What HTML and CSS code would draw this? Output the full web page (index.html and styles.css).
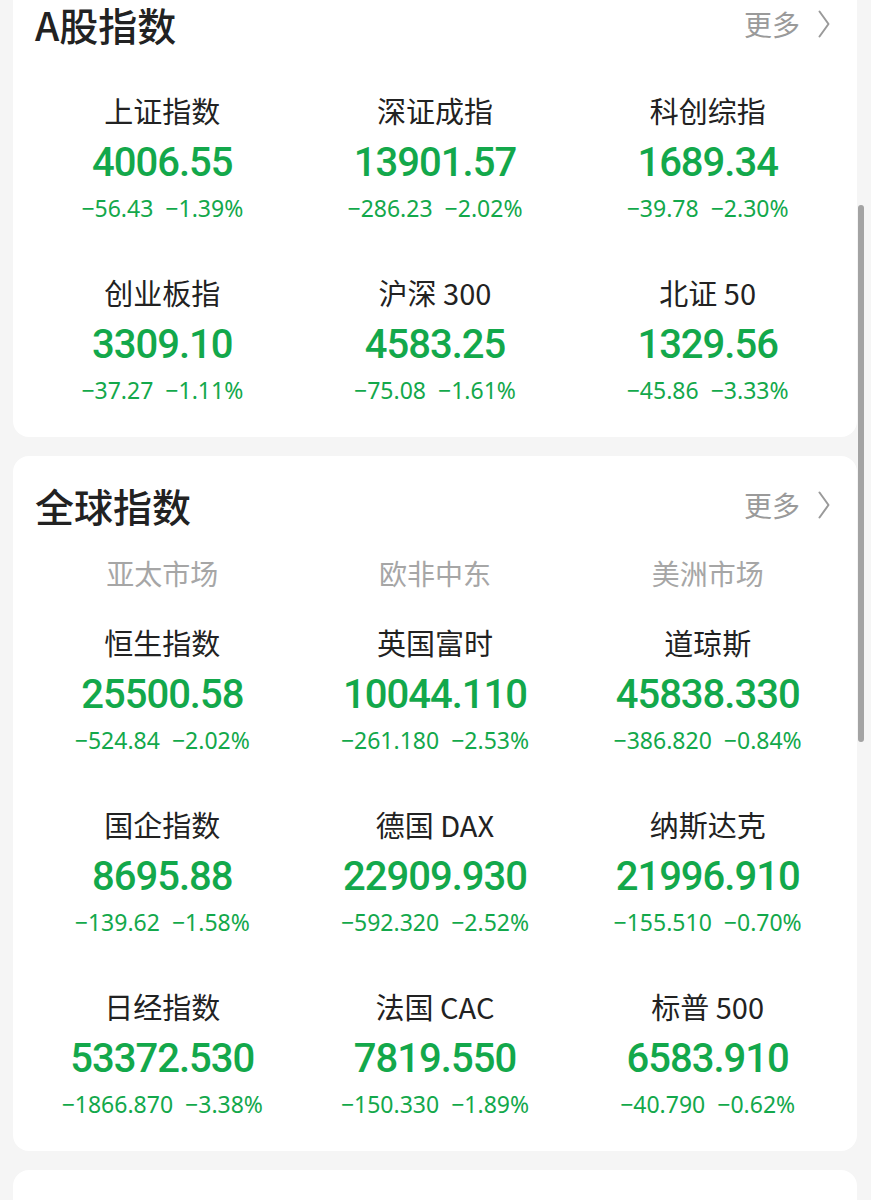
FILE: index.html
```html
<!DOCTYPE html>
<html lang="zh-CN">
<head>
<meta charset="utf-8">
<title>指数</title>
<link rel="stylesheet" href="styles.css">
</head>
<body>
<div class="page">
  <section class="card">
    <header class="card-head">
      <h2 class="card-title">A股指数</h2>
      <a class="more">更多<svg class="chev" viewBox="0 0 12 28" width="12" height="28"><path d="M1.5 1.5 L10.5 14 L1.5 26.5" fill="none" stroke="#9a9a9a" stroke-width="2" stroke-linecap="round" stroke-linejoin="round"/></svg></a>
    </header>
    <div class="grid grid-a">
      <div class="cell"><div class="label">上证指数</div><div class="num">4006.55</div><div class="chg"><span>−56.43</span><span>−1.39%</span></div></div>
      <div class="cell"><div class="label">深证成指</div><div class="num">13901.57</div><div class="chg"><span>−286.23</span><span>−2.02%</span></div></div>
      <div class="cell"><div class="label">科创综指</div><div class="num">1689.34</div><div class="chg"><span>−39.78</span><span>−2.30%</span></div></div>
      <div class="cell"><div class="label">创业板指</div><div class="num">3309.10</div><div class="chg"><span>−37.27</span><span>−1.11%</span></div></div>
      <div class="cell"><div class="label">沪深 300</div><div class="num">4583.25</div><div class="chg"><span>−75.08</span><span>−1.61%</span></div></div>
      <div class="cell"><div class="label">北证 50</div><div class="num">1329.56</div><div class="chg"><span>−45.86</span><span>−3.33%</span></div></div>
    </div>
  </section>

  <section class="card">
    <header class="card-head">
      <h2 class="card-title">全球指数</h2>
      <a class="more">更多<svg class="chev" viewBox="0 0 12 28" width="12" height="28"><path d="M1.5 1.5 L10.5 14 L1.5 26.5" fill="none" stroke="#9a9a9a" stroke-width="2" stroke-linecap="round" stroke-linejoin="round"/></svg></a>
    </header>
    <div class="markets">
      <span>亚太市场</span><span>欧非中东</span><span>美洲市场</span>
    </div>
    <div class="grid grid-b">
      <div class="cell"><div class="label">恒生指数</div><div class="num">25500.58</div><div class="chg"><span>−524.84</span><span>−2.02%</span></div></div>
      <div class="cell"><div class="label">英国富时</div><div class="num">10044.110</div><div class="chg"><span>−261.180</span><span>−2.53%</span></div></div>
      <div class="cell"><div class="label">道琼斯</div><div class="num">45838.330</div><div class="chg"><span>−386.820</span><span>−0.84%</span></div></div>
      <div class="cell"><div class="label">国企指数</div><div class="num">8695.88</div><div class="chg"><span>−139.62</span><span>−1.58%</span></div></div>
      <div class="cell"><div class="label">德国 DAX</div><div class="num">22909.930</div><div class="chg"><span>−592.320</span><span>−2.52%</span></div></div>
      <div class="cell"><div class="label">纳斯达克</div><div class="num">21996.910</div><div class="chg"><span>−155.510</span><span>−0.70%</span></div></div>
      <div class="cell"><div class="label">日经指数</div><div class="num">53372.530</div><div class="chg"><span>−1866.870</span><span>−3.38%</span></div></div>
      <div class="cell"><div class="label">法国 CAC</div><div class="num">7819.550</div><div class="chg"><span>−150.330</span><span>−1.89%</span></div></div>
      <div class="cell"><div class="label">标普 500</div><div class="num">6583.910</div><div class="chg"><span>−40.790</span><span>−0.62%</span></div></div>
    </div>
  </section>

  <section class="card card-next"></section>
</div>
<div class="scrollbar"></div>
</body>
</html>
```

FILE: styles.css
```css
html, body {
  margin: 0;
  padding: 0;
  background: #f5f5f5;
  font-family: "Noto Sans CJK SC", "Noto Sans", sans-serif;
  color: #222;
  overflow: hidden;
}

.page {
  display: flex;
  flex-direction: column;
  gap: 19px;
  margin-top: -25px;
  padding: 0 14px 0 13px;
}

.card {
  background: #fff;
  border-radius: 16px;
  padding: 24px 13px 29px;
}

.card-next {
  min-height: 80px;
  padding: 0;
}

.card-head {
  display: flex;
  align-items: center;
  justify-content: space-between;
  height: 50px;
  padding: 0 14px 0 9px;
}

.card-title {
  margin: 0;
  font-size: 39px;
  line-height: 44px;
  font-weight: 500;
  color: #222;
}

.more {
  display: flex;
  align-items: center;
  font-size: 28px;
  line-height: 40px;
  color: #9a9a9a;
}

.chev {
  margin-left: 18px;
  display: block;
}

.markets {
  display: grid;
  grid-template-columns: repeat(3, 1fr);
  margin-top: 25px;
  font-size: 28px;
  line-height: 36px;
  color: #a6a6a6;
  text-align: center;
}

.grid {
  display: grid;
  grid-template-columns: repeat(3, 1fr);
  row-gap: 48px;
}

.grid-a { margin-top: 43px; }
.grid-b { margin-top: 33px; }

.cell {
  display: flex;
  flex-direction: column;
  align-items: center;
}

.label {
  font-size: 29px;
  line-height: 40px;
  margin-top: -2px;
  margin-bottom: 2px;
  color: #222;
  white-space: nowrap;
}

.num {
  margin-top: 5px;
  font-family: Roboto, "Noto Sans", sans-serif;
  font-weight: 500;
  font-size: 40px;
  line-height: 52px;
  letter-spacing: -1px;
  color: #13a84b;
}

.chg {
  margin-top: 1px;
  display: flex;
  gap: 12px;
  font-family: "Noto Sans", Roboto, sans-serif;
  font-size: 23px;
  line-height: 36px;
  color: #13a84b;
  white-space: nowrap;
}

.scrollbar {
  position: fixed;
  top: 205px;
  right: 7px;
  width: 6px;
  height: 537px;
  border-radius: 3px;
  background: #a3a3a3;
}
```
